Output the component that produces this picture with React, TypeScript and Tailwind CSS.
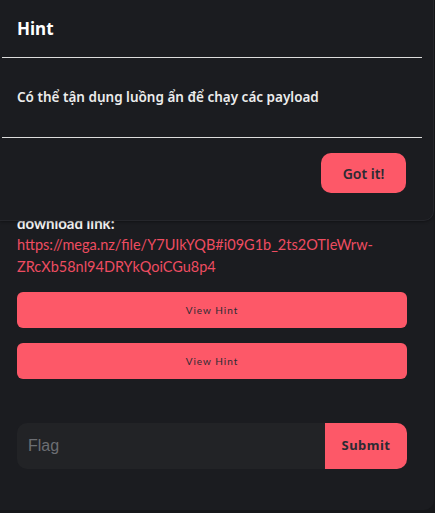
import React from "react";

export default function App() {
	return (
		<div className="relative h-[513px] w-[435px] overflow-hidden bg-[#16171a] font-['Lato',sans-serif]">
			{/* challenge card */}
			<div className="h-[510px] w-[434px] rounded-br-[10px] bg-[#1b1c20] px-[17px] pt-[212px]">
				<div className="text-[15px] font-bold leading-[22px] text-[#f2f2f2]">
					download link:
				</div>
				<a className="block w-[390px] break-words text-[14.5px] leading-[22px] text-[#ee4c60]">
					https://mega.nz/file/Y7UIkYQB#i09G1b_2ts2OTIeWrw-ZRcXb58nl94DRYkQoiCGu8p4
				</a>
				<div className="mt-[14px] flex w-[390px] flex-col gap-[15px]">
					<button className="h-[36px] rounded-[6px] bg-[#fd5868] text-[10px] tracking-[1px] text-[#2b2b33]">
						View Hint
					</button>
					<button className="h-[36px] rounded-[6px] bg-[#fd5868] text-[10px] tracking-[1px] text-[#2b2b33]">
						View Hint
					</button>
				</div>
				<div className="mt-[44px] flex h-[46px] w-[390px]">
					<input
						placeholder="Flag"
						className="h-full flex-1 rounded-l-[10px] bg-[#222326] px-[11px] font-['Liberation_Sans',sans-serif] text-[16px] text-white outline-none placeholder:text-[#6c6e73]"
					/>
					<button className="h-full w-[82px] rounded-r-[10px] bg-[#fd5868] font-['Noto_Sans',sans-serif] text-[13px] font-bold tracking-[0.5px] text-[#2b2b33]">
						Submit
					</button>
				</div>
			</div>

			{/* hint modal */}
			<div className="absolute left-0 top-0 h-[221px] w-[434px] rounded-br-[10px] border-b border-r border-[#25262b] bg-[#1b1c20] shadow-[0_1px_3px_rgba(0,0,0,0.35)]">
				<div className="flex h-[57px] items-center px-[17px] font-['Noto_Sans',sans-serif] text-[17px] font-bold text-white">
					Hint
				</div>
				<div className="ml-[2px] w-[420px] border-t border-b border-[#dcdcdc]">
					<div className="flex h-[79px] items-center px-[15px] font-['Noto_Sans',sans-serif] text-[13.5px] font-semibold text-[#ececec]">
						Có thể tận dụng luồng ẩn để chạy các payload
					</div>
				</div>
				<div className="flex justify-end pr-[27px] pt-[15px]">
					<button className="h-[40px] w-[85px] rounded-[10px] bg-[#fd5868] font-['Noto_Sans',sans-serif] text-[14px] font-semibold text-[#2b2b33]">
						Got it!
					</button>
				</div>
			</div>
		</div>
	);
}
